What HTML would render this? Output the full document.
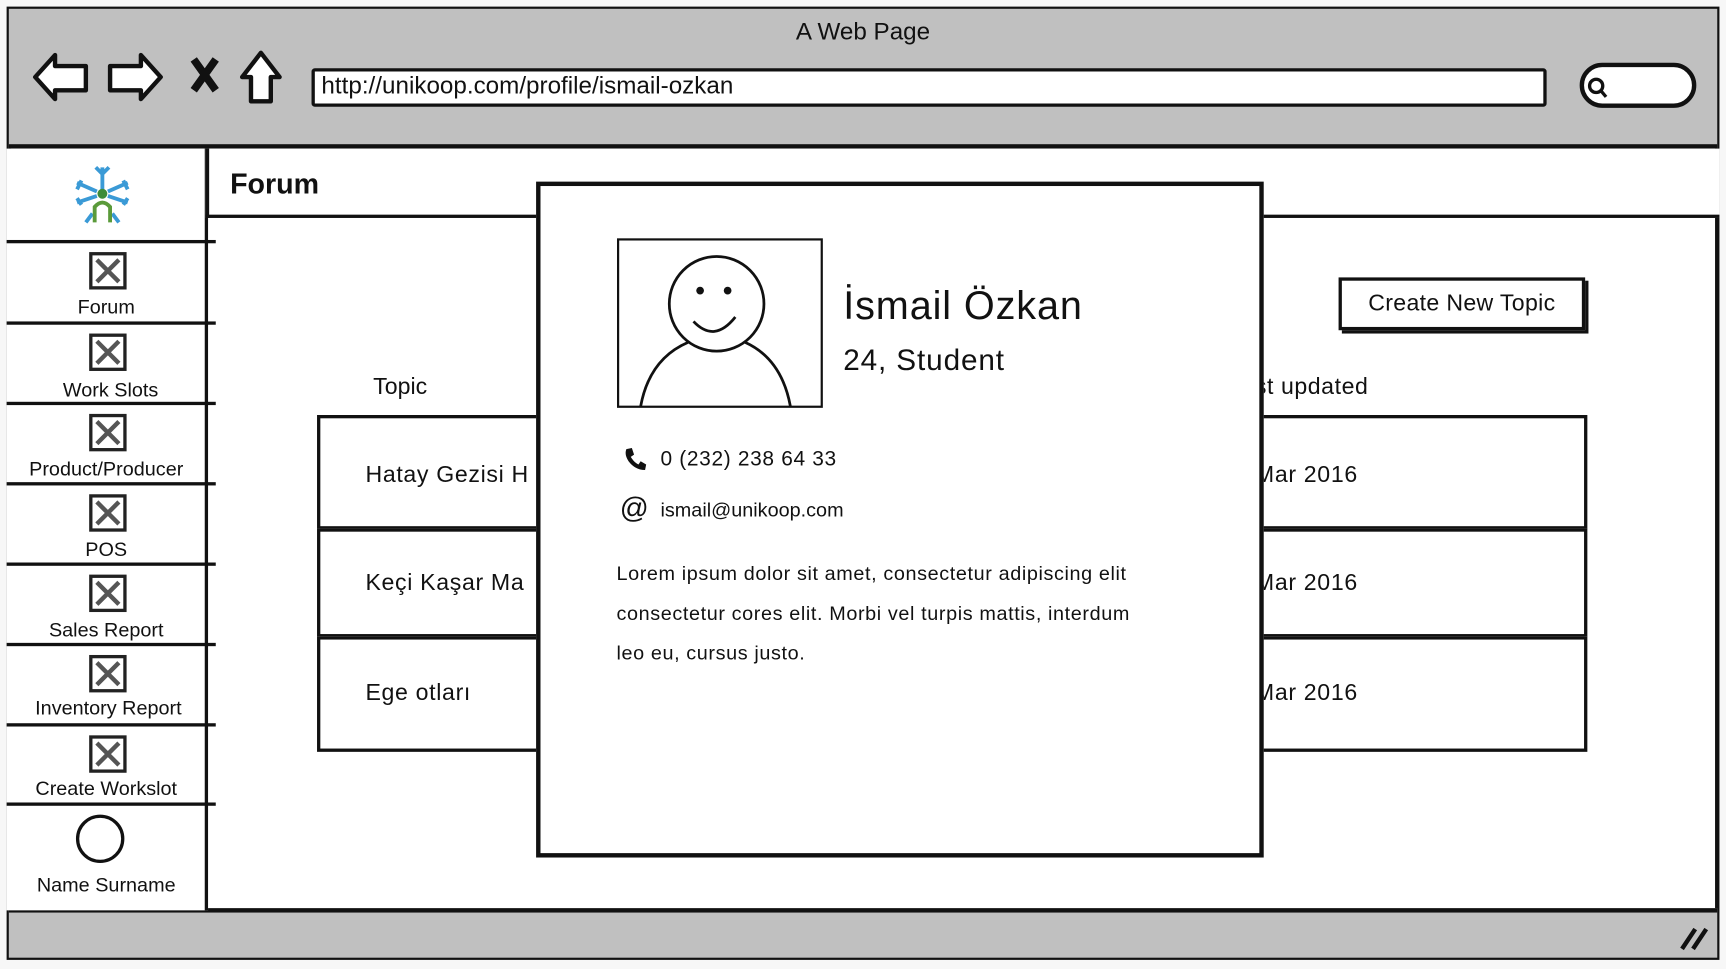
<!DOCTYPE html>
<html><head><meta charset="utf-8"><style>
html,body{margin:0;padding:0;background:#f7f7f7;overflow:hidden;width:1726px;height:968px}
#w{position:absolute;left:0;top:0;width:1568px;height:880px;transform:scale(1.1008);transform-origin:0 0;font-family:"Liberation Sans",sans-serif;color:#111}
.a{position:absolute;box-sizing:border-box}
.t{position:absolute;white-space:nowrap}
.nav{left:6px;width:181px;border-top:3px solid #111;text-align:center;font-size:18px}
.nav .x{position:absolute;left:75px;top:8px;width:34px;height:34px;border:3px solid #222;box-sizing:border-box;background:#fff}
.row{left:288px;width:1154px;border:3px solid #111;background:#fff}
</style></head><body><div id="w">
<div class="a" style="left:6px;top:6px;width:1556px;height:866px;border:4px solid #111;background:#fff"></div>
<div class="a" style="left:8px;top:8px;width:1552px;height:127px;background:#c0c0c0;border-bottom:4px solid #111"></div>
<div class="t" style="left:0;width:1568px;text-align:center;top:16px;font-size:22px">A Web Page</div>
<svg class="a" style="left:28px;top:44px" width="240" height="54" viewBox="0 0 240 54">
<path d="M4 26 L22 6 L22 16 L50 16 L50 38 L22 38 L22 46 Z" fill="#fff" stroke="#111" stroke-width="4" stroke-linejoin="round"/>
<path d="M118 26 L100 6 L100 16 L72 16 L72 38 L100 38 L100 46 Z" fill="#fff" stroke="#111" stroke-width="4" stroke-linejoin="round"/>
<path d="M148 10 L168 38 M168 10 L148 38" stroke="#111" stroke-width="7"/>
<path d="M209 4 L192 26 L200 26 L200 48 L218 48 L218 26 L226 26 Z" fill="#fff" stroke="#111" stroke-width="4" stroke-linejoin="round"/>
</svg>
<div class="a" style="left:283px;top:62px;width:1122px;height:35px;border:3px solid #111;background:#fff;border-radius:3px"></div>
<div class="t" style="left:292px;top:65px;font-size:22px">http://unikoop.com/profile/ismail-ozkan</div>
<div class="a" style="left:1435px;top:57px;width:106px;height:41px;border:4px solid #111;border-radius:22px;background:#fff"></div>
<svg class="a" style="left:1440px;top:68px" width="24" height="24"><circle cx="10" cy="10" r="6" fill="none" stroke="#111" stroke-width="3"/><path d="M14 14 L19 20" stroke="#111" stroke-width="3"/></svg>
<div class="a" style="left:8px;top:825px;width:1552px;height:45px;background:#c0c0c0;border-top:4px solid #111"></div>
<svg class="a" style="left:1522px;top:838px" width="34" height="28"><path d="M6 24 L18 6 M16 24 L28 6" stroke="#111" stroke-width="4"/></svg>
<div class="a" style="left:6px;top:135px;width:183px;height:692px;border-right:3px solid #111;background:#fff"></div>
<svg class="a" style="left:64px;top:148px" width="58" height="58" viewBox="0 0 58 58">
<g stroke="#3a9ad6" stroke-width="3.5" fill="none">
<path d="M29 4 V24 M29 10 L23 4 M29 10 L35 4"/>
<path d="M6 18 L24 26 M6 36 L24 30 M52 18 L34 26 M52 36 L34 30"/>
<path d="M10 16 L6 24 M10 38 L6 32 M48 16 L52 24 M48 38 L52 32"/>
<path d="M20 46 L14 54 M38 46 L44 54"/></g>
<circle cx="29" cy="28" r="4.5" fill="#3d8c3a"/>
<path d="M22 54 V40 Q29 32 36 40 V54" stroke="#5a9a3a" stroke-width="3.5" fill="none"/>
</svg>
<div class="a nav" style="top:218px;height:74px;width:190px"><div class="x"></div><svg class="a" style="left:80px;top:13px" width="24" height="24"><path d="M2 2 L22 22 M22 2 L2 22" stroke="#555" stroke-width="4"/></svg><div class="t" style="left:0;width:181px;top:48px">Forum</div></div>
<div class="a nav" style="top:292px;height:73px;width:190px"><div class="x"></div><svg class="a" style="left:80px;top:13px" width="24" height="24"><path d="M2 2 L22 22 M22 2 L2 22" stroke="#555" stroke-width="4"/></svg><div class="t" style="left:4px;width:181px;top:49px">Work Slots</div></div>
<div class="a nav" style="top:365px;height:73px;width:190px"><div class="x"></div><svg class="a" style="left:80px;top:13px" width="24" height="24"><path d="M2 2 L22 22 M22 2 L2 22" stroke="#555" stroke-width="4"/></svg><div class="t" style="left:0;width:181px;top:48px">Product/Producer</div></div>
<div class="a nav" style="top:438px;height:73px;width:190px"><div class="x"></div><svg class="a" style="left:80px;top:13px" width="24" height="24"><path d="M2 2 L22 22 M22 2 L2 22" stroke="#555" stroke-width="4"/></svg><div class="t" style="left:0;width:181px;top:48px">POS</div></div>
<div class="a nav" style="top:511px;height:73px;width:190px"><div class="x"></div><svg class="a" style="left:80px;top:13px" width="24" height="24"><path d="M2 2 L22 22 M22 2 L2 22" stroke="#555" stroke-width="4"/></svg><div class="t" style="left:0;width:181px;top:48px">Sales Report</div></div>
<div class="a nav" style="top:584px;height:73px;width:190px"><div class="x"></div><svg class="a" style="left:80px;top:13px" width="24" height="24"><path d="M2 2 L22 22 M22 2 L2 22" stroke="#555" stroke-width="4"/></svg><div class="t" style="left:2px;width:181px;top:46px">Inventory Report</div></div>
<div class="a nav" style="top:657px;height:72px;width:190px"><div class="x"></div><svg class="a" style="left:80px;top:13px" width="24" height="24"><path d="M2 2 L22 22 M22 2 L2 22" stroke="#555" stroke-width="4"/></svg><div class="t" style="left:0;width:181px;top:46px">Create Workslot</div></div>
<div class="a nav" style="top:729px;height:96px;width:190px"><div class="a" style="left:63px;top:8px;width:44px;height:44px;border:3px solid #111;border-radius:50%"></div><div class="t" style="left:0;width:181px;top:62px">Name Surname</div></div>
<div class="a" style="left:187px;top:135px;width:1375px;height:63px;border-left:3px solid #111;border-bottom:3px solid #111;background:#fff"></div>
<div class="t" style="left:209px;top:152px;font-size:26px;font-weight:bold">Forum</div>
<div class="a" style="left:1216px;top:252px;width:224px;height:48px;border:3px solid #111;box-shadow:3px 3px 0 #111;background:#fff"></div>
<div class="t" style="left:1216px;width:224px;text-align:center;top:264px;font-size:21px;letter-spacing:.3px">Create New Topic</div>
<div class="t" style="left:339px;top:340px;font-size:21px">Topic</div>
<div class="t" style="left:1140px;top:340px;font-size:21px;letter-spacing:.5px">st updated</div>
<div class="a row" style="top:377px;height:104px"></div>
<div class="a row" style="top:480px;height:99px"></div>
<div class="a row" style="top:578px;height:105px"></div>
<div class="t" style="left:332px;top:420px;font-size:21px;letter-spacing:.6px">Hatay Gezisi H</div>
<div class="t" style="left:332px;top:518px;font-size:21px;letter-spacing:.6px">Keçi Kaşar Ma</div>
<div class="t" style="left:332px;top:618px;font-size:21px;letter-spacing:.6px">Ege otları</div>
<div class="t" style="left:1140px;top:420px;font-size:21px;letter-spacing:.6px">Mar 2016</div>
<div class="t" style="left:1140px;top:518px;font-size:21px;letter-spacing:.6px">Mar 2016</div>
<div class="t" style="left:1140px;top:618px;font-size:21px;letter-spacing:.6px">Mar 2016</div>
<div class="a" style="left:487px;top:165px;width:661px;height:614px;border:4px solid #111;background:#fff;overflow:hidden">
<svg class="a" style="left:69px;top:47px" width="188" height="155" viewBox="0 0 188 155">
<rect x="1.5" y="1.5" width="185" height="152" fill="#fff" stroke="#111" stroke-width="2"/>
<ellipse cx="91" cy="60" rx="43" ry="43" fill="#fff" stroke="#111" stroke-width="2.5"/>
<circle cx="76" cy="48" r="3.5" fill="#111"/><circle cx="101" cy="48" r="3.5" fill="#111"/>
<path d="M70 76 Q89 96 108 72" fill="none" stroke="#111" stroke-width="2.5"/>
<path d="M22 153 Q30 110 65 95 M117 95 Q150 110 158 153" fill="none" stroke="#111" stroke-width="2.5"/>
</svg>
<div class="t" style="left:275px;top:88px;font-size:36px;letter-spacing:.8px">İsmail Özkan</div>
<div class="t" style="left:275px;top:143px;font-size:27px;letter-spacing:.8px">24, Student</div>
<svg class="a" style="left:74px;top:236px" width="24" height="24"><path d="M4 3 L9 2 L11 8 L8 10 Q11 15 15 17 L17 14 L22 17 L21 22 Q12 22 6 14 Q2 8 4 3 Z" fill="#111"/></svg>
<div class="t" style="left:109px;top:238px;font-size:19px;letter-spacing:.6px">0 (232) 238 64 33</div>
<div class="t" style="left:72px;top:277px;font-size:26px">@</div>
<div class="t" style="left:109px;top:284px;font-size:18px">ismail@unikoop.com</div>
<div class="t" style="left:69px;top:342px;font-size:18px;letter-spacing:.55px;width:496px;overflow:hidden">Lorem ipsum dolor sit amet, consectetur adipiscing elit</div>
<div class="t" style="left:69px;top:378px;font-size:18px;letter-spacing:.55px">consectetur cores elit. Morbi vel turpis mattis, interdum</div>
<div class="t" style="left:69px;top:414px;font-size:18px;letter-spacing:.55px">leo eu, cursus justo.</div>
</div>
</div></body></html>
